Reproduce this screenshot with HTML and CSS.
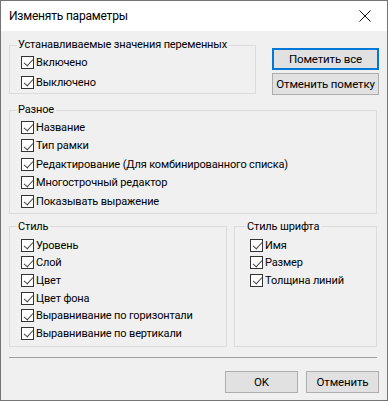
FILE: index.html
```html
<!DOCTYPE html>
<html lang="ru">
<head>
  <meta charset="UTF-8">
  <title>Изменять параметры</title>
  <link rel="stylesheet" href="styles.css">
</head>
<body>
  <div class="window">
    <div class="titlebar">
      <span class="title">Изменять параметры</span>
      <svg class="close" width="12" height="12" viewBox="0 0 12 12">
        <path d="M0.5 0.5 L11.5 11.5 M11.5 0.5 L0.5 11.5" stroke="#111" stroke-width="1"/>
      </svg>
    </div>
    <div class="content">
      <div class="top-row">
        <fieldset class="group group-vars">
          <legend>Устанавливаемые значения переменных</legend>
          <label class="check"><span class="box"></span>Включено</label>
          <label class="check"><span class="box"></span>Выключено</label>
        </fieldset>
        <div class="side-buttons">
          <button class="btn btn-default">Пометить все</button>
          <button class="btn">Отменить пометку</button>
        </div>
      </div>

      <fieldset class="group group-misc">
        <legend>Разное</legend>
        <label class="check"><span class="box"></span>Название</label>
        <label class="check"><span class="box"></span>Тип рамки</label>
        <label class="check"><span class="box"></span>Редактирование (Для комбинированного списка)</label>
        <label class="check"><span class="box"></span>Многострочный редактор</label>
        <label class="check"><span class="box"></span>Показывать выражение</label>
      </fieldset>

      <div class="bottom-row">
        <fieldset class="group group-style">
          <legend>Стиль</legend>
          <label class="check"><span class="box"></span>Уровень</label>
          <label class="check"><span class="box"></span>Слой</label>
          <label class="check"><span class="box"></span>Цвет</label>
          <label class="check"><span class="box"></span>Цвет фона</label>
          <label class="check"><span class="box"></span>Выравнивание по горизонтали</label>
          <label class="check"><span class="box"></span>Выравнивание по вертикали</label>
        </fieldset>
        <fieldset class="group group-font">
          <legend>Стиль шрифта</legend>
          <label class="check"><span class="box"></span>Имя</label>
          <label class="check"><span class="box"></span>Размер</label>
          <label class="check"><span class="box"></span>Толщина линий</label>
        </fieldset>
      </div>

      <hr class="separator">

      <div class="footer-buttons">
        <button class="btn">OK</button>
        <button class="btn">Отменить</button>
      </div>
    </div>
  </div>
</body>
</html>
```

FILE: styles.css
```css
* {
  box-sizing: border-box;
}
body {
  margin: 0;
  font-family: Roboto, "Noto Sans", sans-serif;
  font-size: 11px;
  letter-spacing: -0.15px;
  color: #000;
  background: #fff;
}
.window {
  width: 388px;
  height: 401px;
  border: 1px solid #747474;
  background-color: #f0f0f0;
  display: flex;
  flex-direction: column;
}
.titlebar {
  height: 30px;
  background-color: #fff;
  display: flex;
  align-items: center;
  justify-content: space-between;
  padding: 0 16px 0 8px;
}
.title {
  font-size: 12px;
  letter-spacing: -0.2px;
  line-height: 16px;
}
.content {
  padding: 7px 8px 0 8px;
}
.top-row {
  display: flex;
  align-items: flex-start;
  gap: 16px;
}
.group {
  margin: 0;
  border: 1px solid #dcdcdc;
  padding: 0 0 0 11px;
  min-width: 0;
}
.group legend {
  padding: 0 2px 0 1px;
  margin-left: -4px;
  line-height: 14px;
  height: 14px;
  white-space: nowrap;
}
.check {
  display: flex;
  align-items: center;
  gap: 2px;
  white-space: nowrap;
}
.box {
  width: 13px;
  height: 13px;
  border: 1px solid #333;
  background-color: #fff;
  position: relative;
  flex: none;
}
.box::after {
  content: "";
  position: absolute;
  left: 3.5px;
  top: 0.5px;
  width: 4px;
  height: 8px;
  border-right: 1px solid #444;
  border-bottom: 1px solid #444;
  transform: rotate(42deg);
}
.group-vars {
  width: 247px;
  flex: none;
  padding-bottom: 1px;
}
.group-vars .check {
  height: 20px;
}
.side-buttons {
  display: flex;
  flex-direction: column;
  gap: 3px;
  padding-top: 10px;
}
.btn {
  font-family: inherit;
  font-size: 11.5px;
  letter-spacing: -0.15px;
  color: #000;
  background-color: #e1e1e1;
  border: 1px solid #adadad;
  border-radius: 0;
  height: 22px;
  padding: 0;
  width: 107px;
  white-space: nowrap;
}
.btn-default {
  border: 2px solid #0078d7;
}
.group-misc {
  margin-top: 8px;
  width: 368px;
  padding-top: 1px;
  padding-bottom: 2px;
}
.group-misc .check {
  height: 18.5px;
}
.bottom-row {
  display: flex;
  gap: 7px;
  margin-top: 6px;
}
.group-style {
  width: 218px;
  padding-top: 3px;
  padding-bottom: 4px;
}
.group-font {
  width: 143px;
  padding-top: 3px;
  padding-left: 15px;
}
.group-style .check,
.group-font .check {
  height: 17.6px;
}
.separator {
  margin: 10px 2px 0 0;
  border: none;
  border-top: 1px solid #a0a0a0;
}
.footer-buttons {
  display: flex;
  justify-content: flex-end;
  gap: 8px;
  margin-top: 13px;
}
.footer-buttons .btn {
  width: 73px;
}
```
